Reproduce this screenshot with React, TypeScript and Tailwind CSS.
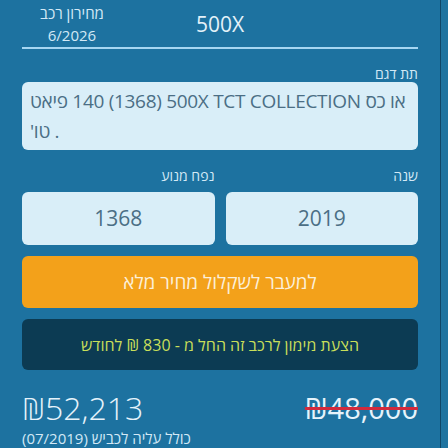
import React from "react";

export default function App() {
  const font = { fontFamily: '"Open Sans", "DejaVu Sans", "Liberation Sans", sans-serif' };
  return (
    <div className="w-[448px] h-[448px] overflow-hidden bg-[#1f74a0]" style={font}>
      <div className="w-[441px] h-[448px] border-r border-[#0f4868] bg-[#1d72a0] px-[22px]" dir="rtl">
        {/* header */}
        <div className="flex h-[47px]" dir="ltr">
          <div className="w-[100px] flex flex-col items-center pt-[2px] text-[15px] leading-[22px] text-[#d3e9f6]">
            <span dir="rtl">מחירון רכב</span>
            <span>6/2026</span>
          </div>
          <div className="flex-1 flex items-center justify-center pt-[2px] text-[21px] text-[#e3f1f9]">500X</div>
          <div className="w-[100px]" />
        </div>
        <div className="h-[2px] bg-[#a6d6f2]" />

        {/* sub model */}
        <div className="mt-[17px] text-[14px] leading-[16px] text-[#d3e9f6]">תת דגם</div>
        <div
          className="h-[68px] rounded-md bg-[#d9eef8] px-[8px] py-[4px] text-[19px] leading-[30px] tracking-[-0.3px] text-[#4b6e85] text-left whitespace-nowrap overflow-hidden"
          dir="ltr"
        >
          <bdi>פיאט</bdi> 140 (1368) 500X TCT COLLECTION <bdi>כס</bdi> <bdi>או</bdi>
          <br />
          <bdi>טו'</bdi> .
        </div>

        {/* year / engine */}
        <div className="mt-[18px] grid grid-cols-2 gap-[11px]">
          <div>
            <div className="text-[14px] leading-[16px] text-[#d3e9f6]">שנה</div>
            <div className="mt-[8px] h-[53px] rounded-md bg-[#d9eef8] flex items-center justify-center text-[21px] text-[#4b6e85]">2019</div>
          </div>
          <div>
            <div className="text-[14px] leading-[16px] text-[#d3e9f6]">נפח מנוע</div>
            <div className="mt-[8px] h-[53px] rounded-md bg-[#d9eef8] flex items-center justify-center text-[21px] text-[#4b6e85]">1368</div>
          </div>
        </div>

        {/* orange button */}
        <div className="mt-[11px] h-[52px] rounded-md bg-[#f3a11a] flex items-center justify-center text-[19px] text-[#fcefd8]">
          למעבר לשקלול מחיר מלא
        </div>

        {/* finance */}
        <div className="mt-[11px] h-[51px] rounded-md bg-[#0c3b53] flex items-center justify-center text-[16px] text-[#c8df5a]">
          הצעת מימון לרכב זה החל מ - 830 ₪ לחודש
        </div>

        {/* prices */}
        <div className="mt-[18px] flex justify-between items-center h-[40px]" dir="ltr">
          <span className="text-[32px] leading-[40px] font-light text-[#e6f3fb]">₪52,213</span>
          <span className="text-[29px] leading-[40px] text-[#e6f3fb] line-through decoration-[#d22a3c] decoration-[3px]">₪48,000</span>
        </div>
        <div className="mt-[2px] text-[15px] leading-[16px] text-[#d3e9f6] text-left">
          <span dir="rtl">כולל עליה לכביש (07/2019)</span>
        </div>
      </div>
    </div>
  );
}
